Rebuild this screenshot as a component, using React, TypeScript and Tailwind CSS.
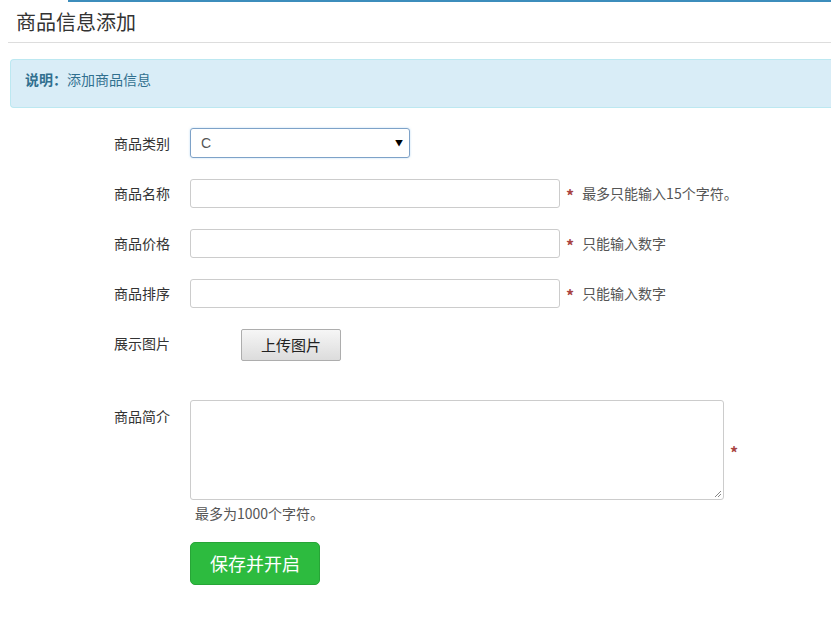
import React from 'react';

const font = "font-['Microsoft_YaHei','Noto_Sans_CJK_SC',sans-serif]";

const Row = ({ label, children }: { label: string; children: React.ReactNode }) => (
  <div className="flex items-center h-[30px]">
    <label className="w-[76px] text-[14px] text-[#333]">{label}</label>
    {children}
  </div>
);

const Hint = ({ text }: { text: string }) => (
  <span className="ml-[6px] flex items-center text-[14px] text-[#555]">
    <span className="text-[#a94442] text-[16px] font-bold mr-[8px] leading-none mt-[3px]">*</span>
    {text}
  </span>
);

export default function App() {
  return (
    <div className={`w-[831px] h-[635px] bg-white overflow-hidden ${font}`}>
      <div className="ml-[68px] h-[2px] bg-[#3c8dbc]" />
      <div className="px-[16px] pt-[7px] pb-[8px] text-[20px] text-[#333] leading-[25px]">商品信息添加</div>
      <div className="ml-[8px] h-px bg-[#dddddd]" />
      <div className="ml-[10px] mt-[16px] h-[49px] bg-[#d9edf7] border border-[#bce8f1] rounded-l-[4px] border-r-0 flex items-center px-[14px] pb-[9px] text-[14px] text-[#31708f]">
        <b>说明：</b>添加商品信息
      </div>
      <div className="pl-[114px] pt-[20px] flex flex-col gap-[20px]">
        <Row label="商品类别">
          <div className="w-[220px] h-[30px] border border-[#7ea2c8] rounded-[3px] flex items-center justify-between pl-[10px] pr-[6px] shadow-[0_0_2px_rgba(102,175,233,0.5)]">
            <span className="text-[14px] text-[#555] font-['Liberation_Sans',sans-serif]">C</span>
            <span className="text-[8px] text-black">▼</span>
          </div>
        </Row>
        <Row label="商品名称">
          <div className="w-[370px] h-[29px] border border-[#cccccc] rounded-[3px]" />
          <Hint text="最多只能输入15个字符。" />
        </Row>
        <Row label="商品价格">
          <div className="w-[370px] h-[29px] border border-[#cccccc] rounded-[3px]" />
          <Hint text="只能输入数字" />
        </Row>
        <Row label="商品排序">
          <div className="w-[370px] h-[29px] border border-[#cccccc] rounded-[3px]" />
          <Hint text="只能输入数字" />
        </Row>
        <Row label="展示图片">
          <button className="ml-[51px] mt-[4px] w-[100px] h-[32px] border border-[#adadad] rounded-[2px] bg-gradient-to-b from-[#f6f6f6] to-[#dcdcdc] text-[15px] text-[#222]">
            上传图片
          </button>
        </Row>
      </div>
      <div className="pl-[114px] pt-[42px] flex">
        <label className="w-[76px] text-[14px] text-[#333] pt-[6px]">商品简介</label>
        <div>
          <div className="flex items-center">
            <div className="relative w-[534px] h-[100px] border border-[#cccccc] rounded-[3px]">
              <svg className="absolute right-[1px] bottom-[1px]" width="9" height="9" viewBox="0 0 9 9">
                <path d="M8 2L2 8M8 5L5 8" stroke="#888" strokeWidth="1" />
              </svg>
            </div>
            <span className="ml-[6px] text-[#a94442] text-[16px] font-bold mt-[3px]">*</span>
          </div>
          <div className="pl-[5px] pt-[3px] text-[14px] text-[#555]">最多为1000个字符。</div>
          <button className="mt-[18px] w-[130px] h-[43px] rounded-[5px] bg-[#2dbb3f] border border-[#27a537] text-white text-[18px]">
            保存并开启
          </button>
        </div>
      </div>
    </div>
  );
}
